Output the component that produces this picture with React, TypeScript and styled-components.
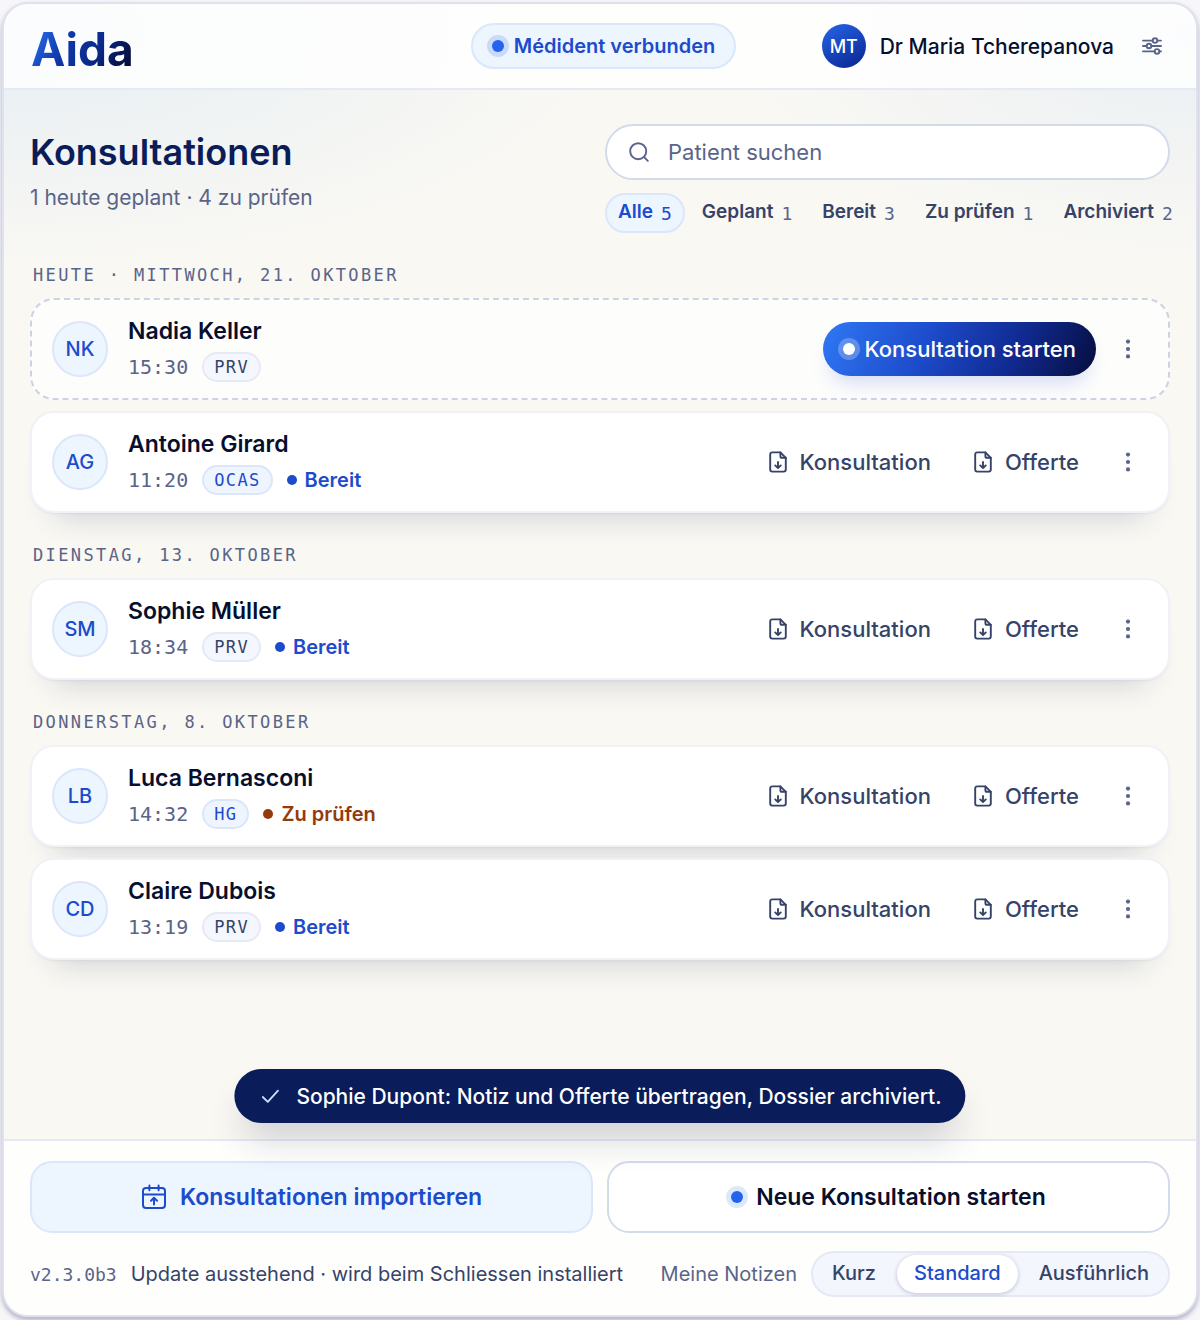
import React, { useState } from "react";
import styled, { createGlobalStyle, css } from "styled-components";

const sans = `Inter, "Liberation Sans", sans-serif`;
const mono = `"DejaVu Sans Mono", "Liberation Mono", monospace`;

const c = {
  ink: "#070f2e",
  navy: "#0a1c5a",
  slate: "#364369",
  muted: "#5a6489",
  blue: "#1c4bcb",
  bright: "#2463eb",
  ice: "#edf5ff",
  iceLine: "#dae7fb",
  line: "#e5e9f5",
  lineStrong: "#d3daea",
  rust: "#943a0c",
};

const GlobalStyle = createGlobalStyle`
  * { box-sizing: border-box; }
  body {
    margin: 0;
    background: #f7f7fa;
    font-family: ${sans};
    color: ${c.ink};
  }
  button, input { font: inherit; color: inherit; }
  button { border: 0; padding: 0; background: none; cursor: pointer; white-space: nowrap; }
  h1, h2, h3, p, ul { margin: 0; padding: 0; }
`;

const Page = styled.div`
  min-height: 100vh;
  display: flex;
  padding: 2px 2px 3px;
`;

const Frame = styled.div`
  flex: 1;
  min-width: 0;
  display: flex;
  flex-direction: column;
  border: 2px solid #dfe1ec;
  border-radius: 26px;
  overflow: hidden;
  background:
    radial-gradient(ellipse 50% 230px at 0 30px, #e6eef4 0%, rgba(230, 238, 244, 0) 100%),
    radial-gradient(ellipse 38% 220px at 100% 30px, #eaeff4 0%, rgba(234, 239, 244, 0) 100%),
    #f9f8f3;
  box-shadow: 0 3px 5px rgba(40, 40, 100, 0.35);
`;

const Header = styled.header`
  display: grid;
  grid-template-columns: 1fr auto 1fr;
  align-items: center;
  height: 86px;
  padding: 0 20px 0 27px;
  border-bottom: 2px solid ${c.line};
  background: rgba(255, 255, 255, 0.82);
`;

const Logo = styled.span`
  justify-self: start;
  padding-top: 6px;
  font-size: 46px;
  line-height: 52px;
  font-weight: 700;
  background: linear-gradient(120deg, #2a72f2 5%, #0d37a8 38%, #0b2a8c 62%, #050c38 92%);
  background-clip: text;
  -webkit-background-clip: text;
  color: transparent;
`;

const Dot = styled.span<{ $tone?: "white" | "blue" | "soft" }>`
  flex: none;
  width: 12px;
  height: 12px;
  border-radius: 50%;
  background: ${(p) => (p.$tone === "white" ? "#fff" : c.bright)};
  box-shadow: 0 0 0 5px
    ${(p) =>
      p.$tone === "white" ? "rgba(255,255,255,0.25)" : p.$tone === "soft" ? "#dbe9fd" : "#c9dafa"};
`;

const Connection = styled.div`
  display: flex;
  align-items: center;
  gap: 10px;
  height: 46px;
  padding: 0 19px;
  border: 2px solid ${c.iceLine};
  border-radius: 23px;
  background: ${c.ice};
  color: ${c.blue};
  font-size: 20px;
  font-weight: 600;
  white-space: nowrap;
`;

const Account = styled.div`
  justify-self: end;
  display: flex;
  align-items: center;
  gap: 14px;
  font-size: 21px;
  font-weight: 550;
  white-space: nowrap;
`;

const UserBadge = styled.span`
  display: grid;
  place-items: center;
  width: 44px;
  height: 44px;
  border-radius: 50%;
  background: linear-gradient(150deg, #2566ea, #0d2a96 90%);
  color: #fff;
  font-size: 18px;
  font-weight: 500;
`;

const IconButton = styled.button`
  display: grid;
  place-items: center;
  width: 48px;
  height: 48px;
  color: ${c.muted};
`;

const Main = styled.main`
  flex: 1;
  padding: 34px 26px 100px;
`;

const Intro = styled.section`
  display: grid;
  grid-template-columns: 1fr 1fr;
  gap: 10px;
  margin-bottom: 31px;
`;

const Titles = styled.div`
  padding-top: 6px;
`;

const Title = styled.h1`
  font-size: 36px;
  line-height: 44px;
  font-weight: 600;
  color: ${c.navy};
`;

const Subtitle = styled.p`
  margin-top: 10px;
  font-size: 21px;
  line-height: 28px;
  color: ${c.muted};
`;

const Finder = styled.div`
  min-width: 0;
`;

const SearchBox = styled.label`
  display: flex;
  align-items: center;
  gap: 18px;
  height: 56px;
  padding: 0 21px;
  border: 2px solid ${c.lineStrong};
  border-radius: 28px;
  background: #fff;
  color: ${c.muted};

  input {
    flex: 1;
    min-width: 0;
    padding: 0;
    border: 0;
    outline: 0;
    background: none;
    font-size: 22px;
    line-height: 28px;
  }
  input::placeholder { color: ${c.muted}; opacity: 1; }
`;

const Filters = styled.div`
  display: flex;
  gap: 4px;
  margin-top: 13px;
`;

const Filter = styled.button<{ $on: boolean }>`
  display: flex;
  align-items: center;
  gap: 8px;
  height: 40px;
  padding: 0 11px 3px;
  border: 2px solid ${(p) => (p.$on ? c.iceLine : "transparent")};
  border-radius: 20px;
  background: ${(p) => (p.$on ? c.ice : "transparent")};
  color: ${(p) => (p.$on ? c.blue : c.slate)};
  font-size: 19px;
  font-weight: 600;

  span {
    padding-top: 4px;
    font-family: ${mono};
    font-size: 18px;
    font-weight: 400;
    color: ${(p) => (p.$on ? c.blue : c.muted)};
  }
`;

const Groups = styled.div`
  display: grid;
  gap: 31px;
`;

const GroupTitle = styled.h2`
  margin-bottom: 12px;
  padding-left: 3px;
  font-family: ${mono};
  font-size: 17px;
  line-height: 22px;
  font-weight: 400;
  letter-spacing: 0.14em;
  text-transform: uppercase;
  color: ${c.muted};
`;

const Rows = styled.ul`
  display: grid;
  gap: 11px;
  list-style: none;
`;

const Row = styled.li<{ $planned?: boolean }>`
  display: flex;
  align-items: center;
  height: 102px;
  padding: 0 16px 0 20px;
  border-radius: 24px;
  ${(p) =>
    p.$planned
      ? css`
          border: 2px dashed #cdd2e4;
          background: rgba(255, 255, 255, 0.7);
        `
      : css`
          border: 2px solid #f0f2f8;
          background: #fff;
          box-shadow: 0 1px 2px rgba(20, 30, 80, 0.05), 0 26px 32px -24px rgba(20, 30, 80, 0.2);
        `}
`;

const Avatar = styled.span`
  flex: none;
  display: grid;
  place-items: center;
  width: 56px;
  height: 56px;
  border: 2px solid ${c.iceLine};
  border-radius: 50%;
  background: ${c.ice};
  color: ${c.blue};
  font-size: 20px;
  font-weight: 550;
`;

const Person = styled.div`
  flex: 1;
  min-width: 0;
  padding-left: 20px;
`;

const Name = styled.h3`
  font-size: 23px;
  line-height: 30px;
  font-weight: 600;
`;

const Meta = styled.div`
  display: flex;
  align-items: center;
  gap: 14px;
  margin-top: 6px;
  height: 30px;
`;

const Time = styled.time`
  font-family: ${mono};
  font-size: 20px;
  color: ${c.muted};
`;

const Tag = styled.span<{ $blue: boolean }>`
  height: 30px;
  padding: 0 10px;
  border: 2px solid ${(p) => (p.$blue ? "#dbe6fa" : "#e6eaf5")};
  border-radius: 15px;
  background: ${(p) => (p.$blue ? "#eff5ff" : "#f4f7fd")};
  font-family: ${mono};
  font-size: 17px;
  line-height: 26px;
  letter-spacing: 0.08em;
  color: ${(p) => (p.$blue ? c.blue : c.slate)};
`;

const Status = styled.span<{ $review: boolean }>`
  display: flex;
  align-items: center;
  gap: 8px;
  font-size: 20px;
  font-weight: 600;
  color: ${(p) => (p.$review ? c.rust : c.blue)};

  &::before {
    content: "";
    width: 10px;
    height: 10px;
    border-radius: 50%;
    background: currentColor;
  }
`;

const Actions = styled.div`
  display: flex;
  align-items: center;
  gap: 8px;
`;

const Download = styled.button`
  display: flex;
  align-items: center;
  gap: 12px;
  height: 48px;
  padding: 0 17px;
  color: ${c.slate};
  font-size: 22px;
  font-weight: 550;
`;

const Start = styled.button`
  display: flex;
  align-items: center;
  gap: 10px;
  height: 54px;
  padding: 0 20px;
  border-radius: 27px;
  background: linear-gradient(115deg, #2f78f4 0%, #1d4bcb 38%, #10298f 70%, #060d3c 100%);
  box-shadow: 0 14px 20px -8px rgba(60, 90, 210, 0.22);
  color: #fff;
  font-size: 22px;
  font-weight: 550;
`;

const Footer = styled.footer`
  position: relative;
  padding: 20px 26px 18px;
  border-top: 2px solid ${c.line};
  background: #fefefc;
`;

const Toast = styled.div`
  position: absolute;
  left: 50%;
  bottom: calc(100% + 18px);
  transform: translateX(-50%);
  display: flex;
  align-items: center;
  gap: 16px;
  height: 54px;
  padding: 0 24px 0 26px;
  border-radius: 27px;
  background: ${c.navy};
  box-shadow: 0 22px 36px -8px rgba(20, 30, 70, 0.2);
  color: #fff;
  font-size: 21px;
  font-weight: 550;
  white-space: nowrap;

  svg { color: #cfe0fb; }
`;

const MainActions = styled.div`
  display: grid;
  grid-template-columns: 1fr 1fr;
  gap: 14px;
`;

const BigButton = styled.button<{ $soft?: boolean }>`
  display: flex;
  align-items: center;
  justify-content: center;
  gap: 13px;
  height: 72px;
  border: 2px solid ${(p) => (p.$soft ? c.iceLine : c.lineStrong)};
  border-radius: 22px;
  background: ${(p) => (p.$soft ? c.ice : "#fff")};
  color: ${(p) => (p.$soft ? c.blue : c.ink)};
  font-size: 23px;
  font-weight: 600;
`;

const Bottom = styled.div`
  display: flex;
  align-items: center;
  margin-top: 18px;
  font-size: 20px;
  white-space: nowrap;
  color: ${c.slate};
`;

const Version = styled.span`
  margin-right: 14px;
  font-family: ${mono};
  font-size: 18px;
  color: ${c.muted};
`;

const Notes = styled.div`
  display: flex;
  align-items: center;
  gap: 14px;
  margin-left: auto;
  color: ${c.muted};
`;

const Segments = styled.div`
  display: flex;
  gap: 4px;
  padding: 2px;
  border: 2px solid ${c.line};
  border-radius: 23px;
  background: #f3f6fd;
`;

const Segment = styled.label<{ $on: boolean }>`
  position: relative;
  height: 38px;
  padding: 0 17px;
  border-radius: 19px;
  font-size: 20px;
  line-height: 36px;
  font-weight: 550;
  color: ${(p) => (p.$on ? c.blue : c.slate)};
  background: ${(p) => (p.$on ? "#fff" : "none")};
  box-shadow: ${(p) => (p.$on ? "0 1px 4px rgba(20, 30, 80, 0.25)" : "none")};
  cursor: pointer;

  input {
    position: absolute;
    inset: 0;
    margin: 0;
    opacity: 0;
    cursor: pointer;
  }
`;

const stroke = {
  fill: "none",
  stroke: "currentColor",
  strokeLinecap: "round" as const,
  strokeLinejoin: "round" as const,
  "aria-hidden": true,
};

const SlidersIcon = () => (
  <svg width="20" height="20" viewBox="0 0 20 20" strokeWidth="1.9" {...stroke}>
    <path d="M1 4.6h9.6M15.4 4.6H19M1 10h3.6M9.4 10H19M1 15.4h11.6M17.4 15.4H19" />
    <circle cx="13" cy="4.6" r="2.3" />
    <circle cx="7" cy="10" r="2.3" />
    <circle cx="15" cy="15.4" r="2.3" />
  </svg>
);

const SearchIcon = () => (
  <svg width="22" height="22" viewBox="0 0 22 22" strokeWidth="1.9" {...stroke}>
    <circle cx="10.2" cy="10.2" r="8" />
    <path d="M16.2 16.2l3.6 3.6" />
  </svg>
);

const FileDownIcon = () => (
  <svg width="20" height="22" viewBox="0 0 20 22" strokeWidth="1.9" {...stroke}>
    <path d="M12.4 1.4H4.2a2 2 0 0 0-2 2v15.2a2 2 0 0 0 2 2h11.6a2 2 0 0 0 2-2V6.8z" />
    <path d="M12.4 1.4v3.8a1.6 1.6 0 0 0 1.6 1.6h3.8" />
    <path d="M10 11v6M7.2 14.4 10 17.2l2.8-2.8" />
  </svg>
);

const KebabIcon = () => (
  <svg width="6" height="20" viewBox="0 0 6 20" fill="currentColor" aria-hidden>
    <circle cx="3" cy="2.6" r="2.1" />
    <circle cx="3" cy="10" r="2.1" />
    <circle cx="3" cy="17.4" r="2.1" />
  </svg>
);

const CalendarUpIcon = () => (
  <svg width="26" height="26" viewBox="0 0 26 26" strokeWidth="2" {...stroke}>
    <rect x="2" y="4" width="22" height="20" rx="3" />
    <path d="M2 10.4h22M8.4 1.6v4.6M17.6 1.6v4.6M13 20.4v-6.2M10 16.8l3-3 3 3" />
  </svg>
);

const CheckIcon = () => (
  <svg width="20" height="20" viewBox="0 0 20 20" strokeWidth="1.8" {...stroke}>
    <path d="M2.4 11 7.4 15.8 17.6 4.6" />
  </svg>
);

type Visit = {
  initials: string;
  name: string;
  time: string;
  tag: string;
  status?: "Bereit" | "Zu prüfen";
};

const groups: { title: string; visits: Visit[] }[] = [
  {
    title: "Heute · Mittwoch, 21. Oktober",
    visits: [
      { initials: "NK", name: "Nadia Keller", time: "15:30", tag: "PRV" },
      { initials: "AG", name: "Antoine Girard", time: "11:20", tag: "OCAS", status: "Bereit" },
    ],
  },
  {
    title: "Dienstag, 13. Oktober",
    visits: [{ initials: "SM", name: "Sophie Müller", time: "18:34", tag: "PRV", status: "Bereit" }],
  },
  {
    title: "Donnerstag, 8. Oktober",
    visits: [
      { initials: "LB", name: "Luca Bernasconi", time: "14:32", tag: "HG", status: "Zu prüfen" },
      { initials: "CD", name: "Claire Dubois", time: "13:19", tag: "PRV", status: "Bereit" },
    ],
  },
];

const filters: [string, number][] = [
  ["Alle", 5],
  ["Geplant", 1],
  ["Bereit", 3],
  ["Zu prüfen", 1],
  ["Archiviert", 2],
];

const lengths = ["Kurz", "Standard", "Ausführlich"];

const VisitRow = ({ visit }: { visit: Visit }) => (
  <Row $planned={!visit.status}>
    <Avatar>{visit.initials}</Avatar>
    <Person>
      <Name>{visit.name}</Name>
      <Meta>
        <Time>{visit.time}</Time>
        <Tag $blue={visit.tag !== "PRV"}>{visit.tag}</Tag>
        {visit.status && <Status $review={visit.status === "Zu prüfen"}>{visit.status}</Status>}
      </Meta>
    </Person>
    <Actions>
      {visit.status ? (
        <>
          <Download type="button">
            <FileDownIcon />
            Konsultation
          </Download>
          <Download type="button">
            <FileDownIcon />
            Offerte
          </Download>
        </>
      ) : (
        <Start type="button">
          <Dot $tone="white" />
          Konsultation starten
        </Start>
      )}
      <IconButton type="button" aria-label={`Mehr zu ${visit.name}`}>
        <KebabIcon />
      </IconButton>
    </Actions>
  </Row>
);

export default function App() {
  const [filter, setFilter] = useState("Alle");
  const [length, setLength] = useState("Standard");

  return (
    <Page>
      <GlobalStyle />
      <Frame>
        <Header>
          <Logo>Aida</Logo>
          <Connection>
            <Dot />
            Médident verbunden
          </Connection>
          <Account>
            <UserBadge>MT</UserBadge>
            Dr Maria Tcherepanova
            <IconButton type="button" aria-label="Einstellungen">
              <SlidersIcon />
            </IconButton>
          </Account>
        </Header>

        <Main>
          <Intro>
            <Titles>
              <Title>Konsultationen</Title>
              <Subtitle>1 heute geplant · 4 zu prüfen</Subtitle>
            </Titles>
            <Finder>
              <SearchBox>
                <SearchIcon />
                <input type="search" placeholder="Patient suchen" aria-label="Patient suchen" />
              </SearchBox>
              <Filters>
                {filters.map(([label, count]) => (
                  <Filter
                    key={label}
                    type="button"
                    $on={filter === label}
                    aria-pressed={filter === label}
                    onClick={() => setFilter(label)}
                  >
                    {label}
                    <span>{count}</span>
                  </Filter>
                ))}
              </Filters>
            </Finder>
          </Intro>

          <Groups>
            {groups.map((group) => (
              <section key={group.title}>
                <GroupTitle>{group.title}</GroupTitle>
                <Rows>
                  {group.visits.map((visit) => (
                    <VisitRow key={visit.name} visit={visit} />
                  ))}
                </Rows>
              </section>
            ))}
          </Groups>
        </Main>

        <Footer>
          <Toast role="status">
            <CheckIcon />
            Sophie Dupont: Notiz und Offerte übertragen, Dossier archiviert.
          </Toast>
          <MainActions>
            <BigButton type="button" $soft>
              <CalendarUpIcon />
              Konsultationen importieren
            </BigButton>
            <BigButton type="button">
              <Dot $tone="soft" />
              Neue Konsultation starten
            </BigButton>
          </MainActions>
          <Bottom>
            <Version>v2.3.0b3</Version>
            Update ausstehend · wird beim Schliessen installiert
            <Notes>
              <span id="notes-label">Meine Notizen</span>
              <Segments role="radiogroup" aria-labelledby="notes-label">
                {lengths.map((option) => (
                  <Segment key={option} $on={length === option}>
                    <input
                      type="radio"
                      name="notes"
                      checked={length === option}
                      onChange={() => setLength(option)}
                    />
                    {option}
                  </Segment>
                ))}
              </Segments>
            </Notes>
          </Bottom>
        </Footer>
      </Frame>
    </Page>
  );
}
